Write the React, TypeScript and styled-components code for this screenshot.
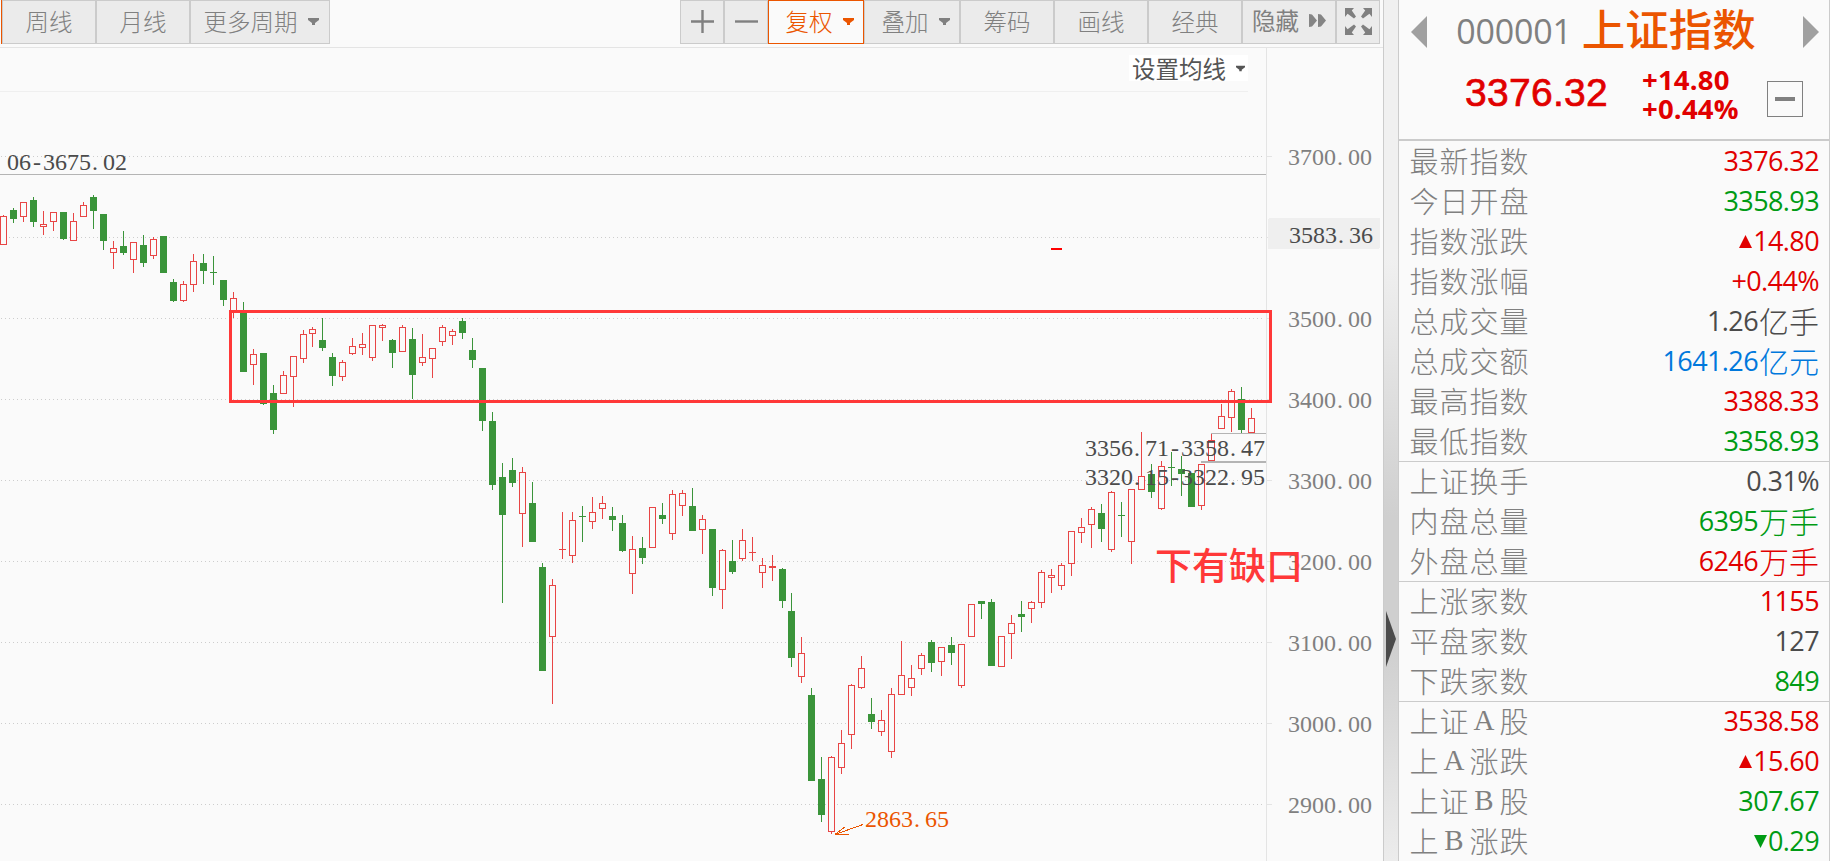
import styled, {createGlobalStyle} from "styled-components";

const Theme = {
    colors: {
        bg: '#fafafa',
        button: '#ebebeb',
        border: '#cbcbcb',
        rule: '#e4e4e4',
        font: '#808080',
        dark: '#4b4b4b',
        accent: '#eb5500',
        up: '#e10000',
        down: '#009b14',
        blue: '#0078dc',
        candleUp: '#e84545',
        candleDown: '#3a943a',
        mark: '#ff3838',
    },
    fonts: {
        cjk: '"Noto Sans CJK SC", sans-serif',
        digits: '"Open Sans", "Noto Sans CJK SC", sans-serif',
        serif: '"Liberation Serif", "Noto Sans CJK SC", serif',
    },
}

// direction, high, body top, body bottom, low
type CandleType = ['r' | 'g', number, number, number, number]

const candles: CandleType[] = [
    ['r', 215, 216, 245, 245], ['g', 208, 210, 219, 223], ['r', 202, 202, 217, 222], ['g', 197, 200, 222, 227],
    ['r', 211, 224, 227, 235], ['r', 212, 212, 222, 231], ['g', 212, 212, 239, 240], ['r', 213, 221, 241, 241],
    ['r', 202, 205, 217, 217], ['g', 195, 197, 211, 229], ['g', 214, 214, 241, 250], ['r', 241, 248, 253, 269],
    ['g', 231, 246, 253, 255], ['r', 242, 242, 260, 273], ['g', 235, 245, 263, 267], ['r', 237, 239, 256, 259],
    ['g', 236, 236, 273, 273], ['g', 279, 282, 301, 302], ['r', 281, 284, 301, 302], ['r', 254, 261, 285, 292],
    ['g', 254, 263, 271, 284], ['g', 256, 272, 273, 285], ['g', 280, 280, 300, 306], ['r', 292, 298, 312, 318],
    ['g', 302, 311, 372, 372], ['r', 349, 354, 365, 385], ['g', 353, 353, 404, 405], ['g', 385, 393, 430, 434],
    ['r', 371, 375, 394, 394], ['r', 356, 356, 377, 407], ['r', 330, 334, 359, 363], ['r', 327, 329, 334, 347],
    ['g', 318, 340, 348, 351], ['g', 353, 357, 376, 386], ['r', 360, 362, 377, 381], ['r', 338, 346, 354, 355],
    ['r', 333, 344, 348, 355], ['r', 325, 325, 358, 361], ['r', 324, 325, 328, 341], ['g', 339, 340, 353, 368],
    ['r', 325, 327, 352, 352], ['g', 328, 339, 375, 399], ['r', 334, 357, 363, 366], ['r', 348, 348, 359, 378],
    ['r', 325, 327, 342, 346], ['r', 329, 331, 336, 345], ['g', 318, 321, 333, 339], ['g', 338, 350, 360, 368],
    ['g', 368, 368, 421, 431], ['g', 412, 421, 485, 490], ['g', 463, 477, 515, 603], ['g', 458, 470, 483, 487],
    ['r', 467, 472, 514, 547], ['g', 482, 503, 542, 542], ['g', 563, 567, 671, 671], ['r', 579, 585, 637, 704],
    ['r', 512, 549, 550, 559], ['r', 512, 520, 556, 563], ['g', 506, 516, 517, 542], ['r', 497, 512, 522, 529],
    ['r', 496, 503, 509, 519], ['g', 507, 516, 520, 531], ['g', 515, 523, 551, 552], ['r', 536, 549, 574, 594],
    ['g', 537, 548, 558, 564], ['r', 507, 507, 548, 548], ['g', 503, 515, 519, 524], ['r', 490, 494, 534, 540],
    ['r', 490, 493, 506, 516], ['g', 488, 506, 531, 531], ['r', 515, 519, 530, 554], ['g', 529, 529, 588, 596],
    ['r', 549, 550, 590, 609], ['g', 540, 561, 572, 574], ['r', 529, 540, 559, 561], ['r', 537, 552, 553, 561],
    ['r', 558, 565, 573, 588], ['r', 555, 566, 568, 581], ['g', 568, 569, 601, 608], ['g', 593, 611, 658, 667],
    ['r', 637, 653, 677, 683], ['g', 688, 695, 781, 781], ['g', 757, 779, 815, 822], ['r', 756, 757, 832, 834],
    ['r', 730, 743, 768, 774], ['r', 684, 685, 735, 749], ['r', 656, 668, 688, 689], ['g', 698, 714, 722, 729],
    ['r', 710, 720, 732, 736], ['r', 688, 694, 752, 758], ['r', 641, 675, 695, 695], ['r', 665, 678, 688, 696],
    ['r', 653, 655, 669, 675], ['g', 640, 642, 663, 672], ['r', 647, 647, 662, 676], ['g', 637, 645, 653, 665],
    ['r', 644, 644, 686, 688], ['r', 604, 604, 637, 637], ['g', 601, 601, 604, 619], ['g', 599, 602, 666, 666],
    ['r', 636, 636, 667, 667], ['r', 615, 623, 634, 659], ['g', 601, 614, 617, 632], ['r', 601, 602, 609, 623],
    ['r', 570, 572, 603, 608], ['r', 569, 575, 578, 593], ['r', 563, 565, 586, 590], ['r', 531, 531, 564, 576],
    ['r', 518, 527, 533, 543], ['r', 507, 509, 525, 548], ['g', 504, 513, 529, 542], ['r', 491, 492, 550, 552],
    ['g', 502, 515, 516, 537], ['r', 489, 489, 542, 564], ['r', 432, 476, 490, 490], ['g', 464, 474, 492, 498],
    ['r', 461, 466, 509, 510], ['g', 452, 467, 468, 486], ['g', 456, 469, 474, 496], ['g', 473, 473, 507, 507],
    ['r', 464, 464, 506, 510], ['r', 434, 440, 461, 461], ['r', 404, 416, 429, 429], ['r', 389, 391, 418, 432],
    ['g', 387, 399, 430, 433], ['r', 408, 418, 433, 433],
]

const levels = ['3700.00', '3600.00', '3500.00', '3400.00', '3300.00', '3200.00', '3100.00', '3000.00', '2900.00']

type RowType = {
    label: string
    value: string
    unit?: string
    color: string
    arrow?: 'up' | 'down'
}

const {up, down, dark, blue} = Theme.colors

const groups: RowType[][] = [
    [
        {label: '最新指数', value: '3376.32', color: up},
        {label: '今日开盘', value: '3358.93', color: down},
        {label: '指数涨跌', value: '14.80', color: up, arrow: 'up'},
        {label: '指数涨幅', value: '+0.44%', color: up},
        {label: '总成交量', value: '1.26', unit: '亿手', color: dark},
        {label: '总成交额', value: '1641.26', unit: '亿元', color: blue},
        {label: '最高指数', value: '3388.33', color: up},
        {label: '最低指数', value: '3358.93', color: down},
    ],
    [
        {label: '上证换手', value: '0.31%', color: dark},
        {label: '内盘总量', value: '6395', unit: '万手', color: down},
        {label: '外盘总量', value: '6246', unit: '万手', color: up},
    ],
    [
        {label: '上涨家数', value: '1155', color: up},
        {label: '平盘家数', value: '127', color: dark},
        {label: '下跌家数', value: '849', color: down},
    ],
    [
        {label: '上证A股', value: '3538.58', color: up},
        {label: '上A涨跌', value: '15.60', color: up, arrow: 'up'},
        {label: '上证B股', value: '307.67', color: down},
        {label: '上B涨跌', value: '0.29', color: down, arrow: 'down'},
    ],
]

const Candle = (props: { index: number, data: CandleType }) => {
    const {index, data: [dir, high, top, bottom, low]} = props
    const x = index * 10 - (index >= 31 ? 1 : 0) - (index >= 79 ? 1 : 0)
    const color = dir === 'r' ? Theme.colors.candleUp : Theme.colors.candleDown
    const hollow = dir === 'r' && bottom - top > 2

    return (
        <g fill={color}>
            <rect x={x + 3} y={high} width={1} height={top - high}/>
            <rect x={x + 3} y={bottom} width={1} height={low - bottom}/>
            {hollow
                ? <rect x={x + 0.5} y={top + 0.5} width={6} height={bottom - top - 1} fill={Theme.colors.bg} stroke={color}/>
                : <rect x={x} y={top} width={7} height={bottom - top}/>}
        </g>
    )
}

// fixed pitch digits, one cell is 12px wide
const Digits = (props: { x: number, y: number, color?: string, children: string }) => {
    const cells = props.children.split('').map((c, i) => props.x + i * 12 + (c === '-' ? 2 : c === '.' ? 1 : 0))
    return <DigitText x={cells.join(' ')} y={props.y} fill={props.color || Theme.colors.dark}>{props.children}</DigitText>
}

const Chart = () => {
    return (
        <StyledChart viewBox="0 92 1383 769" shapeRendering="crispEdges">
            {levels.map((level, i) => {
                const y = 156 + i * 81
                return (
                    <g key={level}>
                        <line x1={1} x2={1263} y1={y + 0.5} y2={y + 0.5} stroke="#cdcdcd" strokeDasharray="1 3"/>
                        <rect x={1267} y={y} width={5} height={1} fill={Theme.colors.rule}/>
                        {i !== 1 && <Digits x={1288} y={y + 9} color="#808080">{level}</Digits>}
                    </g>
                )
            })}
            <rect x={1266} y={92} width={1} height={769} fill={Theme.colors.rule}/>
            <rect x={1268} y={218} width={112} height={31} rx={2} fill="#efefef"/>
            <Digits x={1289} y={243}>3583.36</Digits>

            <rect x={0} y={174} width={1266} height={1} fill="#b4b4b4"/>
            <Digits x={7} y={170}>06-3675.02</Digits>

            {candles.map((c, i) => <Candle key={i} index={i} data={c}/>)}

            <rect x={1211} y={433} width={55} height={1} fill="#b4b4b4"/>
            <rect x={1201} y={461} width={65} height={2} fill="#b4b4b4"/>
            <Digits x={1085} y={456}>3356.71-3358.47</Digits>
            <Digits x={1085} y={485}>3320.15-3322.95</Digits>

            <path d="M863 824.5L835 834.5H849M835 834.5L845 827" fill="none" stroke={Theme.colors.accent}/>
            <Digits x={865} y={827} color={Theme.colors.accent}>2863.65</Digits>

            <rect x={230.5} y={311.5} width={1040} height={90} fill="none" stroke={Theme.colors.mark} strokeWidth={3}/>
            <rect x={1051} y={248} width={11} height={2} fill="#f00"/>
            <Note x={1155} y={580}>下有缺口</Note>
        </StyledChart>
    )
}

const Caret = (props: { color: string, width?: number }) => (
    <svg width={props.width || 11} height="7" viewBox="0 0 11 7" fill={props.color}>
        <path d="M0 0H11V2L7 5V7H4V5L0 2Z"/>
    </svg>
)

const Row = (props: RowType) => {
    return (
        <StyledRow>
            <Label>{props.label.split('').map((c, i) => <Glyph key={i} $latin={c === 'A' || c === 'B'}>{c}</Glyph>)}</Label>
            <Value $color={props.color}>
                {props.arrow && (
                    <svg width="13" height="13" viewBox="0 0 13 13" fill={props.color}>
                        <path d={props.arrow === 'up' ? 'M6.5 0L13 13H0Z' : 'M0 0H13L6.5 13Z'}/>
                    </svg>
                )}
                {props.value}
                {props.unit && <Unit>{props.unit}</Unit>}
            </Value>
        </StyledRow>
    )
}

const App = () => {
    return (
        <Page>
            <GlobalStyle/>
            <ChartPane>
                <Toolbar>
                    <ButtonGroup>
                        <ActiveEdge/>
                        <Button $width={94}>周线</Button>
                        <Button $width={94}>月线</Button>
                        <Button $width={140} $indent={2}>更多周期<Caret color="#808080"/></Button>
                    </ButtonGroup>
                    <ButtonGroup>
                        <Button $width={44}>
                            <svg width="23" height="23" viewBox="0 0 23 23" stroke="#808080" strokeWidth="2.4">
                                <path d="M11.5 0V23M0 11.5H23"/>
                            </svg>
                        </Button>
                        <Button $width={44}>
                            <svg width="23" height="23" viewBox="0 0 23 23" stroke="#808080" strokeWidth="2.4">
                                <path d="M0 11.5H23"/>
                            </svg>
                        </Button>
                        <Button $width={96} $indent={7} $active>复权<Caret color={Theme.colors.accent}/></Button>
                        <Button $width={96} $indent={7}>叠加<Caret color="#808080"/></Button>
                        <Button $width={94}>筹码</Button>
                        <Button $width={94}>画线</Button>
                        <Button $width={94}>经典</Button>
                        <Button $width={94} $strong>
                            隐藏
                            <svg width="17" height="13" viewBox="0 0 17 13" fill="#858585">
                                <path d="M0 0L3 0.5L8 6.5L3 12.5L0 13ZM9 0L12 0.5L17 6.5L12 12.5L9 13Z"/>
                            </svg>
                        </Button>
                        <Button $width={44}>
                            <svg width="27" height="27" viewBox="0 0 27 27" fill="#808080">
                                <path d="M0 0H9L6.8 2.6L11 8.5L9 10.5L2.6 5.8L0 9Z"/>
                                <path d="M27 0H18L20.2 2.6L16 8.5L18 10.5L24.4 5.8L27 9Z"/>
                                <path d="M0 27H9L6.8 24.4L11 18.5L9 16.5L2.6 21.2L0 18Z"/>
                                <path d="M27 27H18L20.2 24.4L16 18.5L18 16.5L24.4 21.2L27 18Z"/>
                            </svg>
                        </Button>
                    </ButtonGroup>
                </Toolbar>
                <AverageBar>
                    <AverageInner>
                        <AverageSelect>设置均线<Caret color="#555" width={9}/></AverageSelect>
                    </AverageInner>
                </AverageBar>
                <Chart/>
            </ChartPane>

            <Splitter>
                <svg width="10" height="56" viewBox="0 0 10 56" fill="#4b4b4b">
                    <path d="M0 0L10 28L0 56Z"/>
                </svg>
            </Splitter>

            <QuotePanel>
                <QuoteHeader>
                    <TitleLine>
                        <svg width="16" height="32" viewBox="0 0 16 32" fill="#a0a0a0"><path d="M16 0V32L0 16Z"/></svg>
                        <Title>
                            <Code>000001</Code>
                            <Name>上证指数</Name>
                        </Title>
                        <svg width="16" height="32" viewBox="0 0 16 32" fill="#a0a0a0"><path d="M0 0V32L16 16Z"/></svg>
                    </TitleLine>
                    <PriceLine>
                        <Price>3376.32</Price>
                        <Change>
                            <span>+14.80</span>
                            <span>+0.44%</span>
                        </Change>
                        <Collapse/>
                    </PriceLine>
                </QuoteHeader>
                {groups.map((rows, i) => (
                    <Group key={i}>
                        {rows.map(row => <Row key={row.label} {...row}/>)}
                    </Group>
                ))}
            </QuotePanel>
        </Page>
    )
}

export default App

const GlobalStyle = createGlobalStyle`
    * {
        box-sizing: border-box;
    }

    body {
        margin: 0;
        overflow: hidden;
        background-color: ${Theme.colors.bg};
    }
`

const Page = styled.div`
    display: flex;
    width: 1830px;
    height: 861px;
    overflow: hidden;
    font-family: ${Theme.fonts.cjk};
    font-weight: 300;
    color: ${Theme.colors.font};
`

const ChartPane = styled.main`
    display: flex;
    flex-direction: column;
    width: 1383px;
    flex-shrink: 0;
`

const Toolbar = styled.div`
    display: flex;
    justify-content: space-between;
    height: 48px;
    padding-right: 3px;
    border-bottom: 1px solid ${Theme.colors.rule};
`

const ButtonGroup = styled.div`
    display: flex;
    height: 44px;
`

const ActiveEdge = styled.div`
    width: 2px;
    border-right: 1px solid ${Theme.colors.accent};
`

const Button = styled.button<{ $width: number, $indent?: number, $active?: boolean, $strong?: boolean }>`
    display: flex;
    align-items: center;
    justify-content: center;
    gap: 10px;
    width: ${props => props.$width}px;
    padding: 0 0 ${props => props.$strong ? 3 : 1}px ${props => props.$indent || 0}px;
    border: 1px solid ${props => props.$active ? Theme.colors.accent : Theme.colors.border};
    background-color: ${props => props.$active ? Theme.colors.bg : Theme.colors.button};
    font-family: ${Theme.fonts.cjk};
    font-weight: ${props => props.$strong ? 400 : 300};
    font-size: 23.5px;
    line-height: 1;
    white-space: nowrap;
    color: ${props => props.$active ? Theme.colors.accent : Theme.colors.font};
`

const AverageBar = styled.div`
    width: 1267px;
    height: 44px;
    border-right: 1px solid ${Theme.colors.rule};
`

const AverageInner = styled.div`
    display: flex;
    justify-content: flex-end;
    align-items: flex-start;
    width: 1248px;
    height: 44px;
    padding-top: 7px;
    border-bottom: 1px solid #efefef;
`

const AverageSelect = styled.div`
    display: flex;
    align-items: center;
    gap: 10px;
    height: 26px;
    padding: 0 3px;
    background-color: #fff;
    font-weight: 400;
    font-size: 23.5px;
    line-height: 24px;
    color: #555;
`

const StyledChart = styled.svg`
    display: block;
    width: 1383px;
    height: 769px;
`

const DigitText = styled.text`
    font-family: ${Theme.fonts.serif};
    font-weight: 400;
    font-size: 24px;
`

const Note = styled.text`
    font-family: ${Theme.fonts.cjk};
    font-weight: 500;
    font-size: 37px;
    fill: ${Theme.colors.mark};
`

const Splitter = styled.div`
    display: flex;
    align-items: center;
    width: 16px;
    flex-shrink: 0;
    padding: 416px 0 0 2px;
    border-left: 1px solid ${Theme.colors.border};
    border-right: 1px solid ${Theme.colors.border};
    background: linear-gradient(#f0f0f0 0%, #f0f0f0 30%, #cfcfcf 60%, #cfcfcf 75%, #ececec 100%);
`

const QuotePanel = styled.aside`
    flex: 1;
    border-right: 1px solid ${Theme.colors.border};
`

const QuoteHeader = styled.header`
    height: 141px;
    border-bottom: 2px solid ${Theme.colors.border};
`

const TitleLine = styled.div`
    display: flex;
    align-items: center;
    justify-content: space-between;
    height: 64px;
    padding: 0 10px 0 12px;
`

const Title = styled.div`
    display: flex;
    align-items: center;
    gap: 10px;
    margin-right: 18px;
    padding-bottom: 3px;
    line-height: 1;
`

const Code = styled.span`
    font-family: ${Theme.fonts.digits};
    font-weight: 400;
    font-size: 34px;
    letter-spacing: -0.2px;
`

const Name = styled.span`
    margin-bottom: 5px;
    font-weight: 500;
    font-size: 43.5px;
    color: ${Theme.colors.accent};
`

const PriceLine = styled.div`
    display: flex;
    padding-left: 66px;
`

const Price = styled.span`
    width: 177px;
    padding-top: 9px;
    font-family: "Liberation Sans", sans-serif;
    font-weight: 400;
    font-size: 39px;
    line-height: 40px;
    letter-spacing: 0.3px;
    color: ${Theme.colors.up};
    -webkit-text-stroke: 0.7px ${Theme.colors.up};
`

const Change = styled.div`
    display: flex;
    flex-direction: column;
    width: 125px;
    font-family: ${Theme.fonts.digits};
    font-weight: 700;
    font-size: 27.5px;
    line-height: 29px;
    letter-spacing: 0.2px;
    padding-top: 1px;
    color: ${Theme.colors.up};
`

const Collapse = styled.button`
    display: flex;
    align-items: center;
    justify-content: center;
    width: 36px;
    height: 36px;
    margin-top: 17px;
    padding: 0;
    border: 1.5px solid ${Theme.colors.font};
    background: none;

    &::before {
        content: '';
        width: 20px;
        height: 4px;
        background-color: ${Theme.colors.font};
    }
`

const Group = styled.section`
    & + & {
        box-shadow: inset 0 1px ${Theme.colors.border};
    }
`

const StyledRow = styled.div`
    display: flex;
    align-items: center;
    justify-content: space-between;
    height: 40px;
    padding: 0 10px;
`

const Label = styled.span`
    display: flex;
    padding-bottom: 2px;
    font-size: 29px;
    line-height: 38px;
`

const Glyph = styled.span<{ $latin: boolean }>`
    width: 30px;
    text-align: center;
    font-family: ${props => props.$latin ? Theme.fonts.serif : Theme.fonts.cjk};
`

const Value = styled.span<{ $color: string }>`
    display: flex;
    align-items: center;
    gap: 1px;
    font-family: ${Theme.fonts.digits};
    font-weight: 400;
    font-size: 27px;
    line-height: 40px;
    letter-spacing: -0.6px;
    color: ${props => props.$color};
`

const Unit = styled.span`
    padding-bottom: 2px;
    font-family: ${Theme.fonts.cjk};
    font-weight: 300;
    font-size: 30px;
    line-height: 38px;
    letter-spacing: 0;
`
